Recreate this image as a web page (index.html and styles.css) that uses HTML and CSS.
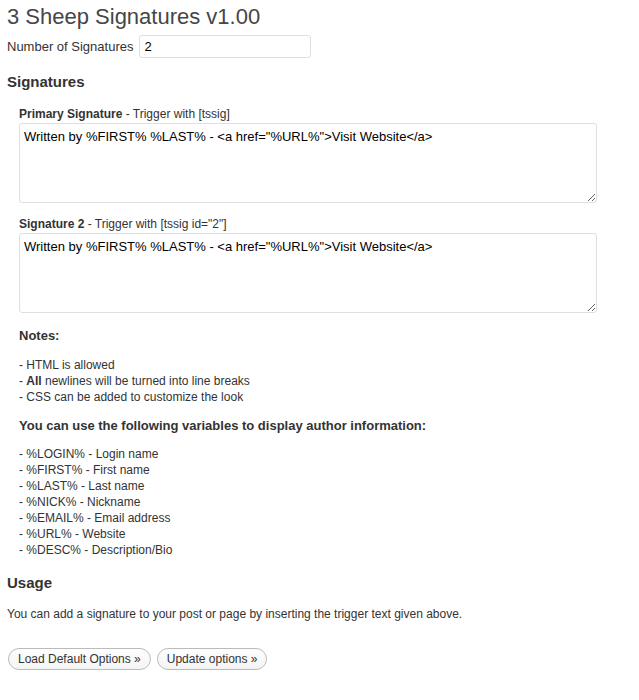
FILE: index.html
```html
<!DOCTYPE html>
<html>
<head>
<meta charset="utf-8">
<link rel="stylesheet" href="styles.css">
</head>
<body>
<div class="wrap">
  <h2 class="title">3 Sheep Signatures v1.00</h2>
  <div class="count-row">
    <label class="count-label">Number of Signatures</label>
    <input class="count-input" type="text" value="2">
  </div>
  <h3 class="section">Signatures</h3>
  <div class="inner">
    <div class="sig-label"><b>Primary Signature</b> - Trigger with [tssig]</div>
    <textarea class="sig-text">Written by %FIRST% %LAST% - &lt;a href="%URL%"&gt;Visit Website&lt;/a&gt;</textarea>
    <div class="sig-label"><b>Signature 2</b> - Trigger with [tssig id="2"]</div>
    <textarea class="sig-text">Written by %FIRST% %LAST% - &lt;a href="%URL%"&gt;Visit Website&lt;/a&gt;</textarea>
    <p class="notes-head">Notes:</p>
    <p class="lines notes-lines">- HTML is allowed<br>- <b>All</b> newlines will be turned into line breaks<br>- CSS can be added to customize the look</p>
    <p class="vars-head">You can use the following variables to display author information:</p>
    <p class="lines vars-lines">- %LOGIN% - Login name<br>- %FIRST% - First name<br>- %LAST% - Last name<br>- %NICK% - Nickname<br>- %EMAIL% - Email address<br>- %URL% - Website<br>- %DESC% - Description/Bio</p>
  </div>
  <h3 class="section usage">Usage</h3>
  <p class="usage-text">You can add a signature to your post or page by inserting the trigger text given above.</p>
  <div class="buttons">
    <button class="btn">Load Default Options »</button>
    <button class="btn">Update options »</button>
  </div>
</div>
</body>
</html>
```
FILE: styles.css
```css
html, body {
  margin: 0;
  padding: 0;
  background: #fff;
}
body {
  font-family: "Liberation Sans", Arial, sans-serif;
  font-size: 13px;
  color: #333;
}
.wrap {
  padding: 0 0 0 7px;
  width: 591px;
}
.title {
  margin: 0;
  padding-top: 3px;
  font-size: 22px;
  font-weight: normal;
  color: #464646;
  line-height: 28px;
}
.count-row {
  display: flex;
  align-items: center;
  gap: 6px;
  margin-top: 4px;
}
.count-label {
  font-size: 13px;
  color: #333;
}
.count-input {
  width: 172px;
  height: 23px;
  box-sizing: border-box;
  border: 1px solid #dfdfdf;
  border-radius: 3px;
  padding: 0 4px;
  font-family: "Liberation Sans", Arial, sans-serif;
  font-size: 13px;
  color: #000;
  margin: 0;
}
.section {
  margin: 14px 0 0;
  font-size: 15px;
  font-weight: bold;
  color: #333;
  line-height: 20px;
}
.inner {
  padding-left: 12px;
}
.sig-label {
  font-size: 12px;
  line-height: 16px;
  margin-top: 14px;
  color: #333;
}
.sig-label + .sig-text + .sig-label {
  margin-top: 13px;
}
.sig-text {
  display: block;
  width: 578px;
  height: 80px;
  box-sizing: border-box;
  margin: 1px 0 0;
  border: 1px solid #dfdfdf;
  border-radius: 3px;
  padding: 4px 4px;
  font-family: "Liberation Sans", Arial, sans-serif;
  font-size: 13px;
  line-height: 17px;
  color: #000;
  resize: vertical;
}
.notes-head {
  margin: 15px 0 0;
  font-weight: bold;
  font-size: 13px;
  line-height: 16px;
}
.lines {
  line-height: 16px;
  font-size: 12px;
}
.notes-lines {
  margin: 13px 0 0;
}
.vars-lines {
  margin: 12px 0 0;
}
.vars-head {
  margin: 13px 0 0;
  font-weight: bold;
  font-size: 13px;
  line-height: 16px;
}
.usage {
  margin-top: 15px;
}
.usage-text {
  margin: 13px 0 0;
  font-size: 12px;
  line-height: 16px;
}
.buttons {
  display: flex;
  gap: 6px;
  margin-top: 26px;
  padding-left: 1px;
}
.btn {
  font-family: "Liberation Sans", Arial, sans-serif;
  font-size: 12px;
  color: #333;
  height: 22px;
  padding: 0 9px;
  border: 1px solid #bbb;
  border-radius: 11px;
  background: linear-gradient(#fefefe, #f4f4f4);
  margin: 0;
}
```
